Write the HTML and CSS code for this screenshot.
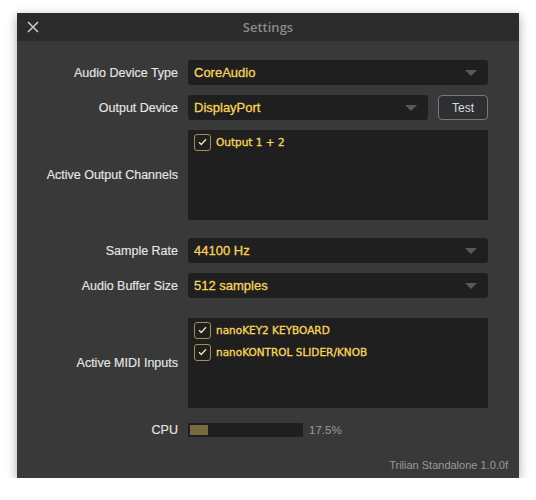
FILE: index.html
```html
<!DOCTYPE html>
<html>
<head>
<meta charset="utf-8">
<link rel="stylesheet" href="styles.css">
</head>
<body>
<div class="window">
  <div class="titlebar">
    <svg class="close" width="12" height="12" viewBox="0 0 12 12"><path d="M1 1L11 11M11 1L1 11" stroke="#c8c8c8" stroke-width="1.6" fill="none"/></svg>
    <div class="title">Settings</div>
  </div>
  <div class="content">
    <div class="row r-device">
      <div class="label">Audio Device Type</div>
      <div class="combo"><span>CoreAudio</span><i class="arrow"></i></div>
    </div>
    <div class="row r-output">
      <div class="label">Output Device</div>
      <div class="ctl-pair">
        <div class="combo"><span>DisplayPort</span><i class="arrow"></i></div>
        <div class="btn">Test</div>
      </div>
    </div>
    <div class="row r-channels">
      <div class="label">Active Output Channels</div>
      <div class="list">
        <div class="item"><span class="check"><svg width="9" height="8" viewBox="0 0 9 8"><path d="M1 4.2L3.3 6.5L8 1.3" stroke="#f2e3b8" stroke-width="1.3" fill="none"/></svg></span>Output 1 + 2</div>
      </div>
    </div>
    <div class="row r-rate">
      <div class="label">Sample Rate</div>
      <div class="combo"><span>44100 Hz</span><i class="arrow"></i></div>
    </div>
    <div class="row r-buffer">
      <div class="label">Audio Buffer Size</div>
      <div class="combo"><span>512 samples</span><i class="arrow"></i></div>
    </div>
    <div class="row r-midi">
      <div class="label">Active MIDI Inputs</div>
      <div class="list">
        <div class="item"><span class="check"><svg width="9" height="8" viewBox="0 0 9 8"><path d="M1 4.2L3.3 6.5L8 1.3" stroke="#f2e3b8" stroke-width="1.3" fill="none"/></svg></span>nanoKEY2 KEYBOARD</div>
        <div class="item"><span class="check"><svg width="9" height="8" viewBox="0 0 9 8"><path d="M1 4.2L3.3 6.5L8 1.3" stroke="#f2e3b8" stroke-width="1.3" fill="none"/></svg></span>nanoKONTROL SLIDER/KNOB</div>
      </div>
    </div>
    <div class="row r-cpu">
      <div class="label">CPU</div>
      <div class="cpu">
        <div class="bar"><div class="fill" style="width:18px"></div></div>
        <span class="pct">17.5%</span>
      </div>
    </div>
  </div>
  <div class="footer">Trilian Standalone 1.0.0f</div>
</div>
</body>
</html>
```
FILE: styles.css
```css
html, body {
  margin: 0;
  padding: 0;
  background: #ffffff;
}
body {
  padding: 13px 0 0 17px;
  font-family: "Liberation Sans", Arial, sans-serif;
}
.window {
  width: 502px;
  height: 465px;
  background: #393939;
  box-shadow: 0 3px 10px rgba(0,0,0,0.35);
  display: flex;
  flex-direction: column;
  position: relative;
}
.titlebar {
  height: 28px;
  background: #2b2b2b;
  display: flex;
  align-items: center;
  justify-content: center;
  position: relative;
}
.close {
  position: absolute;
  left: 10px;
  top: 8px;
}
.title {
  font-family: "Open Sans", sans-serif;
  font-weight: 600;
  font-size: 13px;
  color: #8a8a8a;
}
.content {
  padding: 19px 31px 0 0;
  display: flex;
  flex-direction: column;
}
.row {
  display: grid;
  grid-template-columns: 161px 300px;
  column-gap: 10px;
  align-items: center;
}
.r-output, .r-channels, .r-buffer { margin-top: 10px; }
.r-rate { margin-top: 18px; }
.r-midi { margin-top: 20px; }
.r-cpu { margin-top: 15px; }
.label {
  text-align: right;
  font-size: 12.5px;
  color: #e6e6e6;
  -webkit-text-stroke: 0.15px #e6e6e6;
}
.combo {
  height: 25px;
  background: #1f1f1f;
  border-radius: 3px;
  display: flex;
  align-items: center;
  justify-content: space-between;
  padding: 0 11px 0 6px;
  font-size: 13px;
  color: #f7d35c;
  -webkit-text-stroke: 0.3px #f7d35c;
}
.arrow {
  width: 0;
  height: 0;
  border-left: 6px solid transparent;
  border-right: 6px solid transparent;
  border-top: 6px solid #5a5a5a;
}
.ctl-pair {
  display: flex;
  gap: 10px;
}
.ctl-pair .combo { flex: 1; }
.btn {
  width: 48px;
  height: 23px;
  border: 1px solid #787878;
  border-radius: 4px;
  background: #2e2f33;
  color: #dcdcdc;
  font-size: 12px;
  display: flex;
  align-items: center;
  justify-content: center;
}
.list {
  height: 90px;
  background: #1f1f1f;
  box-sizing: border-box;
  padding: 3px 6px;
  display: flex;
  flex-direction: column;
  gap: 4px;
}
.item {
  display: flex;
  align-items: center;
  gap: 5px;
  height: 18px;
  font-family: "DejaVu Sans", sans-serif;
  font-size: 10.5px;
  color: #f7d35c;
  -webkit-text-stroke: 0.35px #f7d35c;
}
.check {
  width: 15px;
  height: 15px;
  border: 1.5px solid #a88c50;
  border-radius: 3px;
  display: flex;
  align-items: center;
  justify-content: center;
}
.cpu {
  display: flex;
  align-items: center;
  gap: 6px;
}
.bar {
  width: 111px;
  height: 10px;
  padding: 2px;
  background: #1f1f1f;
}
.fill {
  height: 10px;
  background: #7a6b3e;
}
.pct {
  font-size: 11.5px;
  color: #9a9a9a;
}
.footer {
  margin-top: auto;
  align-self: flex-end;
  padding: 0 11px 7px 0;
  font-size: 11px;
  color: #9a9a9a;
}
```
